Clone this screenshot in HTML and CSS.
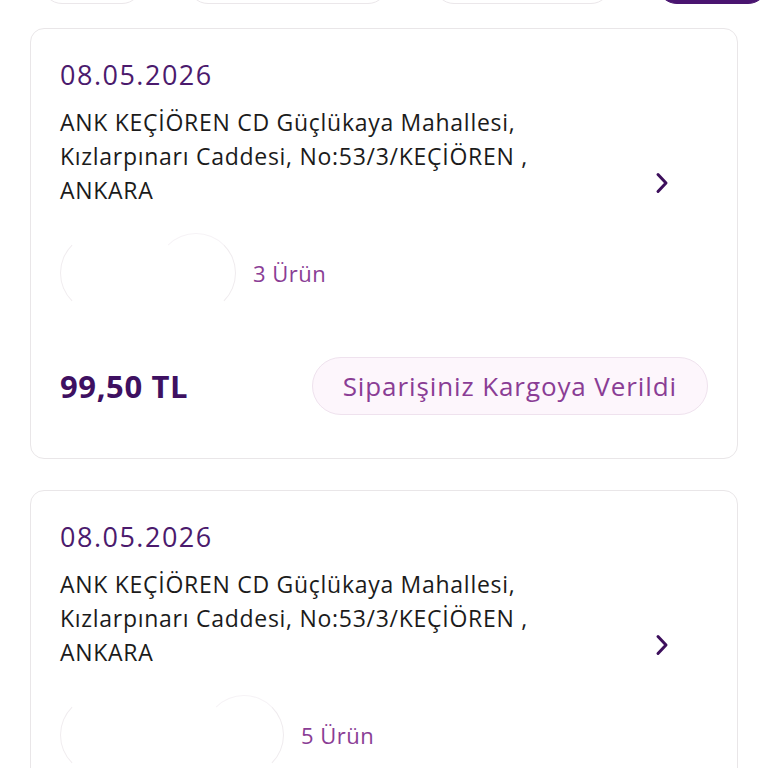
FILE: index.html
```html
<!DOCTYPE html>
<html lang="tr">
<head>
<meta charset="utf-8">
<link rel="stylesheet" href="styles.css">
</head>
<body>
<div class="page">
  <div class="tabs">
    <div class="tab t1"></div>
    <div class="tab t2"></div>
    <div class="tab t3"></div>
    <div class="tab t4 active"></div>
  </div>

  <div class="card">
    <div class="head">
      <div class="info">
        <div class="date">08.05.2026</div>
        <div class="addr">ANK KEÇİÖREN CD Güçlükaya Mahallesi,<br>Kızlarpınarı Caddesi, No:53/3/KEÇİÖREN ,<br>ANKARA</div>
      </div>
      <svg class="chev" width="24" height="24" viewBox="0 0 24 24"><path d="M8 3.5 L16 12 L8 20.5" fill="none" stroke="#3d0f5c" stroke-width="3" stroke-linecap="round" stroke-linejoin="round"/></svg>
    </div>
    <div class="items">
      <div class="thumbs">
        <span class="th"></span><span class="th"></span><span class="th"></span>
      </div>
      <span class="count">3 Ürün</span>
    </div>
    <div class="foot">
      <span class="price">99,50 TL</span>
      <span class="status">Siparişiniz Kargoya Verildi</span>
    </div>
  </div>

  <div class="card">
    <div class="head">
      <div class="info">
        <div class="date">08.05.2026</div>
        <div class="addr">ANK KEÇİÖREN CD Güçlükaya Mahallesi,<br>Kızlarpınarı Caddesi, No:53/3/KEÇİÖREN ,<br>ANKARA</div>
      </div>
      <svg class="chev" width="24" height="24" viewBox="0 0 24 24"><path d="M8 3.5 L16 12 L8 20.5" fill="none" stroke="#3d0f5c" stroke-width="3" stroke-linecap="round" stroke-linejoin="round"/></svg>
    </div>
    <div class="items">
      <div class="thumbs">
        <span class="th"></span><span class="th"></span><span class="th"></span><span class="th"></span>
      </div>
      <span class="count">5 Ürün</span>
    </div>
    <div class="foot">
      <span class="price">99,50 TL</span>
      <span class="status">Siparişiniz Kargoya Verildi</span>
    </div>
  </div>
</div>
</body>
</html>
```

FILE: styles.css
```css
html, body {
  margin: 0;
  padding: 0;
  background: #ffffff;
  overflow: hidden;
}
body {
  font-family: "Open Sans", "Noto Sans", sans-serif;
  color: #1a1a1a;
}
.page {
  width: 768px;
  height: 768px;
  overflow: hidden;
}
.tabs {
  display: flex;
  gap: 46px;
  padding-left: 42px;
  height: 40px;
  margin-top: -36px;
  margin-bottom: 24px;
}
.tab {
  height: 40px;
  border: 1.5px solid #ebe7ea;
  border-radius: 22px;
  box-sizing: border-box;
  background: #fff;
}
.t1 { width: 108px; }
.t2 { width: 216px; }
.t3 { width: 190px; }
.t4 { width: 120px; }
.tab.active {
  background: #4a1570;
  border-color: #4a1570;
}
.card {
  margin: 0 30px 31px 30px;
  border: 1.5px solid #e9e6e8;
  border-radius: 14px;
  padding: 29px 29px 43px 29px;
  background: #fff;
}
.head {
  display: flex;
  align-items: flex-end;
}
.info {
  flex: 1;
}
.chev {
  margin-right: 34px;
  margin-bottom: 12px;
}
.date {
  font-size: 27px;
  line-height: 34px;
  font-weight: 500;
  color: #4b1a6d;
  letter-spacing: 1.5px;
}
.addr {
  margin-top: 13px;
  font-size: 23px;
  line-height: 34px;
  font-weight: 500;
  color: #1b1b1b;
  letter-spacing: 0.72px;
}
.items {
  display: flex;
  align-items: center;
  margin-top: 26px;
}
.thumbs {
  display: flex;
}
.th {
  width: 80px;
  height: 80px;
  border-radius: 50%;
  border: 1.5px solid transparent;
  box-sizing: border-box;
  background: transparent;
}
.th:first-child {
  border-left-color: #f0ecef;
}
.th:last-child {
  border-right-color: #efebee;
  border-top-color: #f6f3f6;
}
.th + .th {
  margin-left: -32px;
}
.count {
  margin-left: 17px;
  font-size: 22px;
  font-weight: 500;
  color: #8a3d95;
  letter-spacing: 0.5px;
}
.foot {
  display: flex;
  align-items: center;
  justify-content: space-between;
  margin-top: 44px;
}
.price {
  font-size: 31px;
  font-weight: 700;
  color: #3e1061;
  letter-spacing: 0.6px;
}
.status {
  height: 58px;
  box-sizing: border-box;
  padding: 0 30px;
  display: flex;
  align-items: center;
  border: 1.5px solid #efe2ee;
  background: #fdf6fc;
  border-radius: 29px;
  font-size: 26px;
  font-weight: 500;
  color: #8a3d95;
  letter-spacing: 0.9px;
}
```
